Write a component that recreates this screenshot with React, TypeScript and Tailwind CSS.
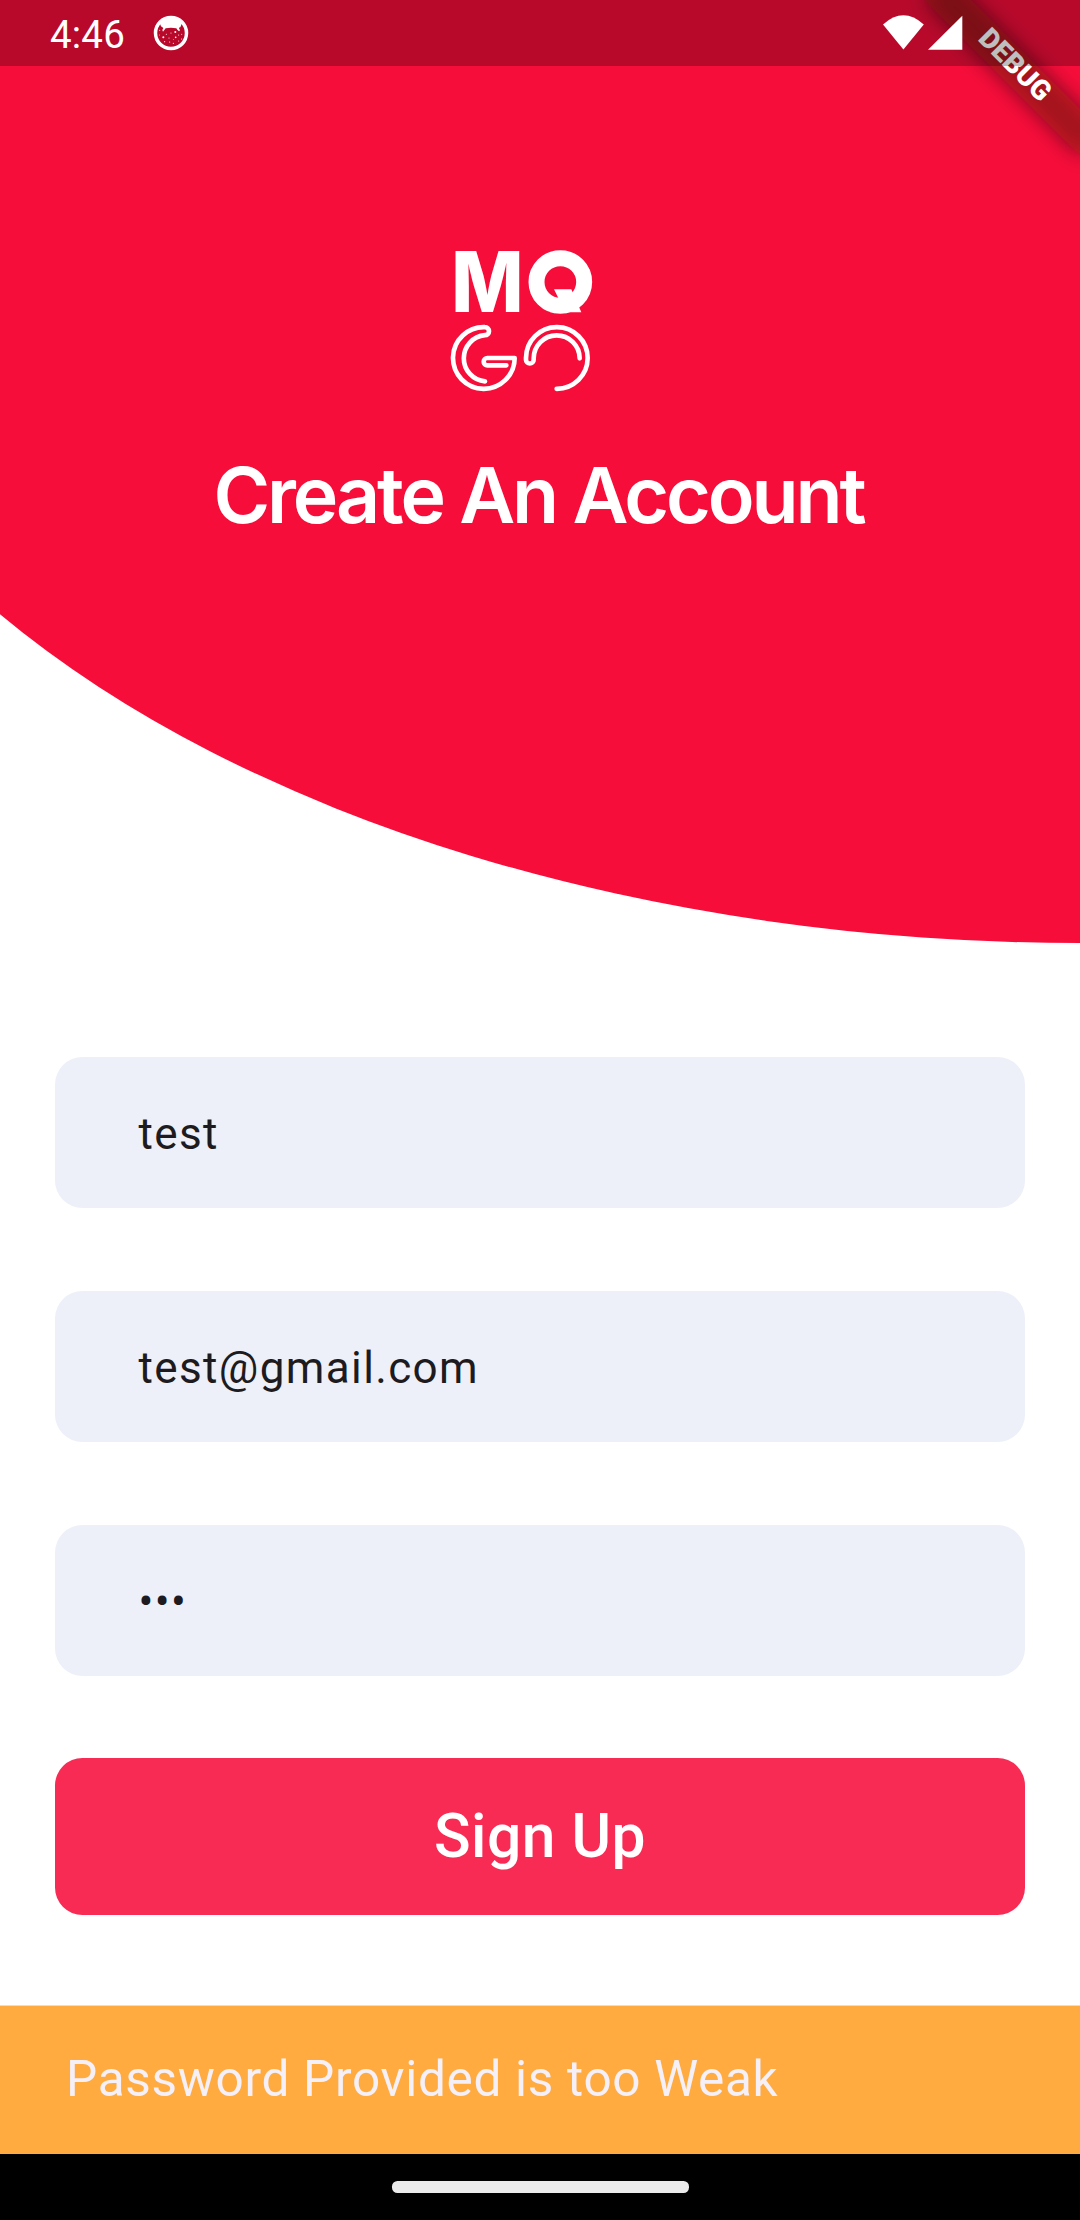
import React from "react";

function AppNotificationIcon() {
  return (
    <svg className="h-[36px] w-[36px]" viewBox="0 0 108 108">
      <circle cx="54" cy="54" r="46.5" fill="none" stroke="#fff" strokeWidth="10.5" />
      <path
        d="M12 46C14 24 32 6 54 6S94 24 96 46L88 22 82 37Q79 36 78 40L81 46 78 49 73 44 70 40Q54 36 38 40L34 45 30 50 28 45 31 39 24 34 20 24Z"
        fill="#fff"
      />
      <g fill="#fff">
        <circle cx="31" cy="67" r="3" />
        <circle cx="67" cy="51" r="3" />
        <circle cx="68" cy="67" r="2.5" />
        <circle cx="40" cy="58" r="1.6" />
        <circle cx="54" cy="54" r="1.6" />
        <circle cx="20" cy="46" r="1.6" />
        <circle cx="19" cy="60" r="1.4" />
        <circle cx="48" cy="69" r="1.6" />
        <circle cx="35" cy="80" r="1.7" />
        <circle cx="50" cy="81" r="1.7" />
        <circle cx="61" cy="85" r="1.7" />
        <circle cx="77" cy="60" r="1.6" />
        <circle cx="86" cy="58" r="1.5" />
        <circle cx="86" cy="72" r="1.6" />
        <circle cx="77" cy="78" r="1.5" />
        <circle cx="61" cy="74" r="1.3" />
      </g>
    </svg>
  );
}

function StatusBar() {
  return (
    <div className="relative z-20 flex h-[66px] items-center bg-black/25 text-white">
      <span className="ml-[50px] mt-[3px] w-[103px] text-[38.5px] leading-[46px] tracking-[0.2px]">4:46</span>
      <AppNotificationIcon />
      <div className="ml-auto mr-[117px] flex items-center gap-[4px]">
        <svg className="h-[36px] w-[42px]" viewBox="0 0 42 36">
          <path d="M1 9.500Q21.400-8.800 41.800 9.500L21.400 34.500Z" fill="#fff" />
        </svg>
        <svg className="h-[36px] w-[35px]" viewBox="0 0 35 36">
          <path d="M0 34.800 34.300.700V34.800Z" fill="#fff" />
        </svg>
      </div>
    </div>
  );
}

function DebugBanner() {
  return (
    <div className="pointer-events-none absolute right-0 top-0 z-10 h-[260px] w-[260px] overflow-hidden">
      <div className="absolute left-[260px] top-0 h-0 w-0 rotate-45">
        <div className="absolute left-[-110px] top-[77px] h-[33px] w-[220px] bg-black/50 blur-[10.9px]" />
        <div className="absolute left-[-110px] top-[77px] h-[33px] w-[220px] bg-[#b71c1c]/63 text-center text-[28px] font-black leading-[30px] text-white">
          DEBUG
        </div>
      </div>
    </div>
  );
}

function Logo() {
  return (
    <svg className="mr-[40px] h-[180px] w-[180px]" viewBox="0 0 540 540" fill="none">
      <text
        transform="translate(64 247) scale(0.92 1)"
        fontFamily="Inter"
        fontWeight="800"
        fontSize="250"
        fill="#fff"
      >
        M
      </text>
      <circle cx="391" cy="156" r="71.500" stroke="#fff" strokeWidth="48" />
      <path d="M372 178H424L454 247H360L388 210Z" fill="#fff" />
      <g stroke="#fff" strokeWidth="14" strokeLinecap="round" strokeLinejoin="round">
        <path d="M165 454A69.500 69.500 0 0 1 165 315.500A12 12 0 0 0 165 291.500A92.500 92.500 0 1 0 254 384H172A11 11 0 0 0 172 406H229" />
        <path d="M449 385A69 69 0 0 0 311 385V389A11.500 11.500 0 0 1 288 389V384A92.500 92.500 0 1 1 380 476.500" />
      </g>
    </svg>
  );
}

function Header() {
  return (
    <header className="relative h-[943px]">
      <svg className="absolute inset-0 h-full w-full" viewBox="0 0 1080 943">
        <path d="M0 0H1080V943A1320 773 0 0 1 0 614.300Z" fill="#f70d3a" />
      </svg>
      <DebugBanner />
      <StatusBar />
      <div className="relative flex flex-col items-center pt-[164px]">
        <Logo />
        <h1 className="mr-[3px] mt-[38px] whitespace-nowrap font-['Inter'] text-[77px] font-semibold leading-[94px] tracking-[-3.1px] text-white">
          Create An Account
        </h1>
      </div>
    </header>
  );
}

function Field({ children }: { children: React.ReactNode }) {
  return (
    <div className="flex h-[151px] items-center rounded-[27.5px] bg-[#edf0f8] px-[83.5px] text-[44px] leading-[66px] tracking-[1.375px] text-[#1d1b20]">
      <span className="mt-[3px]">{children}</span>
    </div>
  );
}

export default function App() {
  return (
    <div className="relative flex h-[2220px] w-[1080px] flex-col overflow-hidden bg-white font-['Roboto',sans-serif]">
      <Header />
      <main className="flex flex-col gap-[82.75px] px-[55px] pt-[114px]">
        <Field>test</Field>
        <Field>test@gmail.com</Field>
        <Field>•••</Field>
        <button className="h-[157px] rounded-[27.5px] bg-[#f82b54] text-[60.5px] font-medium leading-[84px] tracking-[0.5px] text-white">
          Sign Up
        </button>
      </main>
      <div className="mt-auto flex h-[149px] items-center border-t border-[#ffd9a8] bg-[#ffab40] px-[66px] pb-[2px] text-[49.5px] tracking-[0.6875px] text-[#f5eff7]">
        Password Provided is too Weak
      </div>
      <div className="flex h-[66px] items-center justify-center bg-black">
        <div className="h-[12px] w-[297px] rounded-[5.5px] bg-[#ebebeb]" />
      </div>
    </div>
  );
}
